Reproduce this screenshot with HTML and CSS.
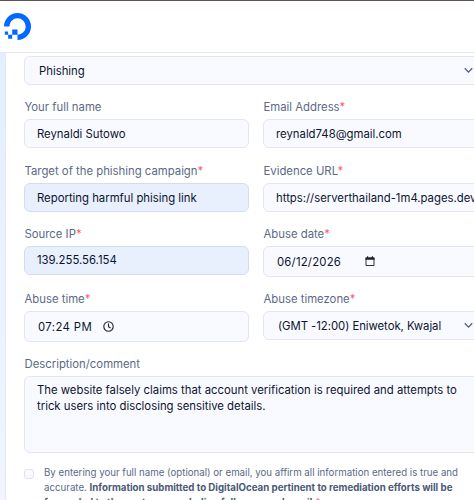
FILE: index.html
```html
<!DOCTYPE html>
<html lang="en">
<head>
<meta charset="utf-8">
<title>Report abuse</title>
<link rel="stylesheet" href="styles.css">
</head>
<body>
<header class="topbar">
  <svg class="logo" viewBox="0 0 26 26" aria-label="DigitalOcean">
    <path fill="#0069ff" d="M13 26v-5.1A7.9 7.9 0 1 0 5.1 13H0A13 13 0 1 1 13 26zM7.9 15.9H13v5H7.9zM4 20.9h3.900v3.900H4zM.8 17.700H4v3.200H.8z"/>
  </svg>
</header>
<main class="page">
  <form class="card">
    <div class="control select wide"><span class="pick">Phishing</span><svg class="chevron" viewBox="0 0 8 6"><path d="M.7 1 4 4.500 7.300 1"/></svg></div>
    <div class="grid">
      <div class="field"><span class="label">Your full name</span><div class="control">Reynaldi Sutowo</div></div>
      <div class="field"><span class="label">Email Address<i>*</i></span><div class="control">reynald748@gmail.com</div></div>
      <div class="field"><span class="label">Target of the phishing campaign<i>*</i></span><div class="control filled">Reporting harmful phising link</div></div>
      <div class="field"><span class="label">Evidence URL<i>*</i></span><div class="control">https://serverthailand-1m4.pages.dev</div></div>
      <div class="field"><span class="label">Source IP<i>*</i></span><div class="control filled ip">139.255.56.154</div></div>
      <div class="field"><span class="label">Abuse date<i>*</i></span><div class="control tall"><span class="date">06/12/2026</span><svg class="calendar" viewBox="0 0 10 11"><path d="M1 2h8v7.500H1z" fill="none" stroke="#333" stroke-width="1"/><path d="M.5 1.500h9v2.300h-9zM2 .3h1.200v2H2zM6.800 .3H8v2H6.800z" fill="#222"/></svg></div></div>
      <div class="field"><span class="label">Abuse time<i>*</i></span><div class="control tall"><span class="time">07:24 PM</span><svg class="clock" viewBox="0 0 11 11"><circle cx="5.500" cy="5.500" r="4.700"/><path d="M5.500 2.500v3.200l2.100 1.300"/></svg></div></div>
      <div class="field"><span class="label">Abuse timezone<i>*</i></span><div class="control select"><span class="pick zone">(GMT -12:00) Eniwetok, Kwajal</span><svg class="chevron" viewBox="0 0 8 6"><path d="M.7 1 4 4.500 7.300 1"/></svg></div></div>
      <div class="field full"><span class="label">Description/comment</span><div class="control area">The website falsely claims that account verification is required and attempts to<br>trick users into disclosing sensitive details.</div></div>
    </div>
    <div class="consent">
      <span class="box"></span>
      <p>By entering your full name (optional) or email, you affirm all information entered is true and<br>accurate. <b>Information submitted to DigitalOcean pertinent to remediation efforts will be<br>forwarded to the customer excluding full name and email.</b><i>*</i></p>
    </div>
  </form>
</main>
</body>
</html>
```
FILE: styles.css
```css
* { box-sizing: border-box; }
html, body { height: 500px; overflow: hidden; }
body {
  margin: 0;
  background: #fff;
  font-family: Inter, "Liberation Sans", sans-serif;
  font-size: 11.33px;
  color: #0c1431;
}
i { font-style: normal; color: #ff5a6e; }
.topbar {
  height: 53px;
  border-top: 1px solid #5f514b;
  border-bottom: 1px solid #e5e8ed;
  padding: 12px 0 0 4px;
}
.logo { display: block; width: 27px; height: 27px; }
.page {
  height: 447px;
  padding-left: 5px;
  background: linear-gradient(#e3effd, #f0f5fe);
  overflow: hidden;
}
.card {
  width: 503px;
  height: 520px;
  padding: 3px 14px 0 18px;
  background: #fff;
  border-left: 1px solid #e5e8ef;
}
.control {
  display: flex;
  align-items: center;
  height: 29px;
  padding: 0 12px;
  border: 1px solid #e3e6ef;
  border-radius: 6px;
  background: #f9faff;
  white-space: nowrap;
}
.filled { background: #e8effd; border-color: #d5dded; }
.ip { padding-bottom: 2px; }
.tall { height: 31px; }
.wide { width: 464px; }
.select { padding: 0 14px; justify-content: space-between; }
.chevron { width: 9px; height: 7px; fill: none; stroke: #4c5b85; stroke-width: 1.1; }
.grid {
  display: grid;
  grid-template-columns: 225px 225px;
  grid-template-rows: 54px 53px 55px 55px 101px;
  gap: 10px 14px;
  margin-top: 10px;
}
.full { grid-column: 1 / 3; }
.label {
  display: block;
  height: 24px;
  padding-left: .5px;
  line-height: 24px;
  color: #5b6987;
}
.date, .time { padding-left: 1px; }
.date { letter-spacing: .22px; }
.time { letter-spacing: .4px; }
.zone { letter-spacing: -.04px; }
.calendar { width: 10px; height: 11px; margin-left: 24px; }
.clock { width: 11px; height: 11px; margin-left: 11px; fill: none; stroke: #222; stroke-width: 1.1; }
.area {
  display: block;
  width: 464px;
  height: 77px;
  padding-top: 5px;
  line-height: 16px;
}
.consent { display: flex; margin-top: 12px; }
.box {
  width: 10px;
  height: 10px;
  margin: 4px 10px 0 0;
  border: 1px solid #dfe2ec;
  border-radius: 3px;
  background: #f9faff;
}
.consent p {
  margin: 0;
  font-size: 9.7px;
  line-height: 15px;
  color: #5b6987;
  white-space: nowrap;
}
.consent b { font-weight: 700; color: #4b5978; }
```
